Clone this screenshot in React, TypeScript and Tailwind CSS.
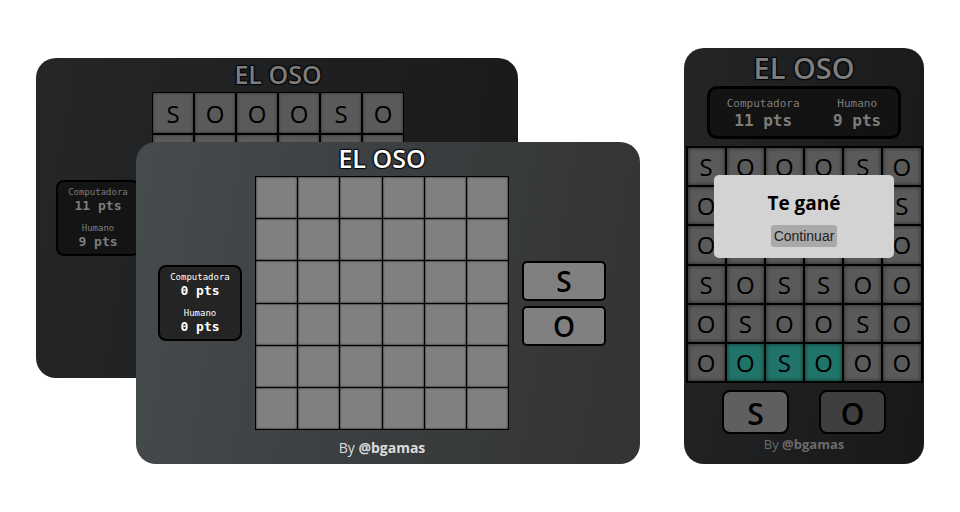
import { clsx } from "clsx";

const SANS = "font-['Segoe_UI','Open_Sans',sans-serif]";
const MONO = "font-['Consolas','DejaVu_Sans_Mono',monospace]";

const EMPTY_BOARD = ["      ", "      ", "      ", "      ", "      ", "      "];
const OPENING_ROW = ["SOOOSO", "      ", "      ", "      ", "      ", "      "];
const FINISHED_BOARD = ["SOOOSO", "O    S", "O    O", "SOSSOO", "OSOOSO", "OOSOOO"];

const OUTLINE =
  "[text-shadow:1px_1px_1px_#000b,-1px_-1px_1px_#000b,1px_-1px_1px_#000b,-1px_1px_1px_#000b]";

type BoardProps = {
  rows: string[];
  className: string;
  cellClassName: string;
  winning?: number[];
};

function Board({ rows, className, cellClassName, winning = [] }: BoardProps) {
  return (
    <div className={clsx("grid aspect-square shrink-0 grid-cols-6 grid-rows-6 bg-black", className)}>
      {rows.flatMap((row, r) =>
        row.split("").map((letter, c) => {
          const won = winning.includes(r * 6 + c);
          return (
            <button
              key={`${r}-${c}`}
              type="button"
              aria-label={`Fila ${r + 1}, columna ${c + 1}`}
              className={clsx(
                "flex min-h-0 min-w-0 items-center justify-center pt-px text-2xl leading-none text-black",
                cellClassName,
                won ? "bg-[#217469]" : "",
              )}
            >
              {letter.trim()}
            </button>
          );
        }),
      )}
    </div>
  );
}

type ScoreProps = {
  computer: number;
  human: number;
  className: string;
  labelClassName: string;
  valueClassName: string;
};

function Scores({ computer, human, className, labelClassName, valueClassName }: ScoreProps) {
  const entries = [
    { name: "Computadora", points: computer },
    { name: "Humano", points: human },
  ];
  return (
    <dl className={clsx("flex shrink-0 text-center", MONO, className)}>
      {entries.map((entry) => (
        <div key={entry.name}>
          <dt className={labelClassName}>{entry.name}</dt>
          <dd className={clsx("font-bold", valueClassName)}>{entry.points} pts</dd>
        </div>
      ))}
    </dl>
  );
}

function Author({ className }: { className: string }) {
  return (
    <footer className={clsx("text-center", className)}>
      By <strong className="font-bold">@bgamas</strong>
    </footer>
  );
}

function FinishedDesktop() {
  return (
    <section className="absolute top-0 left-0 w-[482px] max-w-full rounded-[20px] bg-linear-[100deg] from-[#242628] to-[#191919] pb-[34px] pl-[2px] text-[#7d7d7d]">
      <h2 className={clsx("h-[34px] text-center text-[25px] leading-8 font-semibold", OUTLINE)}>EL OSO</h2>
      <div className="flex items-center justify-center gap-3">
        <Scores
          computer={11}
          human={9}
          className="w-[84px] flex-col gap-2 rounded-lg border-2 border-black bg-[#141414] py-1"
          labelClassName="text-[9px] leading-3"
          valueClassName="text-[13px] leading-4"
        />
        <Board
          rows={OPENING_ROW}
          className="w-[252px] gap-[2px] p-px"
          cellClassName="bg-[#5a5a5a] inset-shadow-[0_0_3px_#0008]"
        />
        <div className="w-[84px]" />
      </div>
    </section>
  );
}

function NewDesktop() {
  const choice =
    "flex h-10 w-[84px] items-center justify-center rounded-[5px] border-2 border-black bg-[#808080] pt-px text-[28px] leading-none font-semibold text-black";
  return (
    <section className="relative rounded-[20px] bg-linear-[100deg] from-[#464b4e] via-[#3b3e40] to-[#323332] pr-3 text-white">
      <h1 className={clsx("h-[34px] text-center text-[25px] leading-8 font-semibold", OUTLINE)}>EL OSO</h1>
      <div className="flex items-center justify-center gap-[13px]">
        <Scores
          computer={0}
          human={0}
          className="w-[84px] flex-col gap-2 rounded-lg border-2 border-black bg-[#242424] py-1"
          labelClassName="text-[9px] leading-3"
          valueClassName="text-[13px] leading-4"
        />
        <Board
          rows={EMPTY_BOARD}
          className="w-[254px] gap-px p-px"
          cellClassName="bg-[#808080] inset-shadow-[0_0_2px_#000]"
        />
        <div className="flex shrink-0 flex-col gap-[5px]">
          <button type="button" className={choice}>S</button>
          <button type="button" className={choice}>O</button>
        </div>
      </div>
      <Author className="h-[34px] pt-1 text-sm leading-7 text-[#dcdcdc]" />
    </section>
  );
}

function FinishedPhone() {
  const choice =
    "flex h-11 w-[67px] items-center justify-center rounded-lg border-2 border-black pt-1 text-3xl leading-none font-semibold text-black";
  return (
    <section className="relative flex w-60 shrink-0 flex-col items-center rounded-[20px] bg-linear-[100deg] from-[#232527] to-[#181818] text-[#7d7d7d]">
      <h2 className={clsx("h-[38px] text-[29px] leading-10 font-semibold", OUTLINE)}>EL OSO</h2>
      <Scores
        computer={11}
        human={9}
        className="h-[53px] w-[194px] items-center justify-around rounded-[10px] border-3 border-black bg-[#131313]"
        labelClassName="text-[11px] leading-4"
        valueClassName="text-base leading-[18px]"
      />
      <Board
        rows={FINISHED_BOARD}
        winning={[31, 32, 33]}
        className="mt-[7px] w-[237px] gap-[2px] p-[2px]"
        cellClassName="bg-[#5a5a5a] inset-shadow-[0_0_4px_#0009]"
      />
      <div className="mt-[7px] flex gap-[30px]">
        <button type="button" className={clsx(choice, "bg-[#5f5f5f]")}>S</button>
        <button type="button" className={clsx(choice, "bg-[#3f3f3f]")}>O</button>
      </div>
      <Author className="h-[30px] text-[13px] leading-5 text-[#6c6c6c]" />
      <div
        role="dialog"
        aria-labelledby="result"
        className="absolute inset-x-[30px] top-[127px] flex h-[83px] flex-col items-center rounded-[5px] bg-[#d3d3d3] pt-3.5"
      >
        <h3 id="result" className="text-[19px] leading-7 font-bold text-black">Te gané</h3>
        <button
          type="button"
          className="mt-2 rounded-[3px] bg-[#a9a9a9] px-[3px] font-['Liberation_Sans',Arial,sans-serif] text-sm leading-[22px] text-[#222]"
        >
          Continuar
        </button>
      </div>
    </section>
  );
}

export default function App() {
  return (
    <main className={clsx("flex min-h-screen items-end gap-11 bg-white px-9 py-12", SANS)}>
      <div className="relative min-w-0 flex-1 pt-[84px] pl-[100px]">
        <FinishedDesktop />
        <NewDesktop />
      </div>
      <FinishedPhone />
    </main>
  );
}
